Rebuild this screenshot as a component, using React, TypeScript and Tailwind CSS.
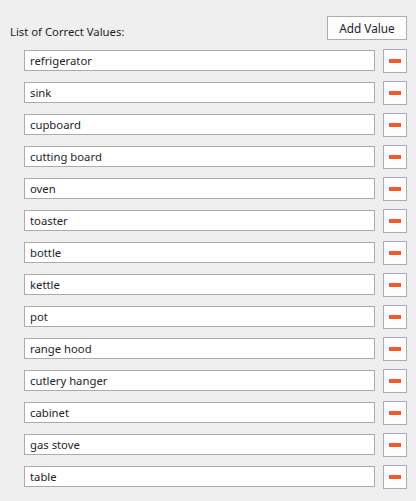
import React from "react";

const items = [
  "refrigerator",
  "sink",
  "cupboard",
  "cutting board",
  "oven",
  "toaster",
  "bottle",
  "kettle",
  "pot",
  "range hood",
  "cutlery hanger",
  "cabinet",
  "gas stove",
  "table",
];

export default function App() {
  return (
    <div
      className="w-[416px] h-[501px] bg-[#efefef] pt-[16px] pl-[10px] pr-[9px] text-[11.3px] text-[#1e1e2a]"
      style={{ fontFamily: '"Noto Sans", "Open Sans", sans-serif' }}
    >
      <div className="flex justify-between items-start h-[23px]">
        <span className="mt-[7px] leading-[18px]">List of Correct Values:</span>
        <button className="w-[80px] h-[24px] border border-[#adadad] bg-[#fdfdfd] leading-[20px] text-[11.8px] text-[#1e1e2a]">
          Add Value
        </button>
      </div>
      <div className="mt-[10px] flex flex-col gap-[8px] pl-[14px]">
        {items.map((it) => (
          <div key={it} className="flex items-start gap-[8px] h-[24px]">
            <div className="mt-[1px] w-[351px] h-[21px] border border-[#ababab] bg-white pl-[5px] leading-[19px]">
              {it}
            </div>
            <button className="w-[24px] h-[24px] border border-[#adadad] bg-[#fdfdfd] flex items-center justify-center">
              <span className="block w-[12px] h-[4px] bg-[#f05a28]" />
            </button>
          </div>
        ))}
      </div>
    </div>
  );
}
